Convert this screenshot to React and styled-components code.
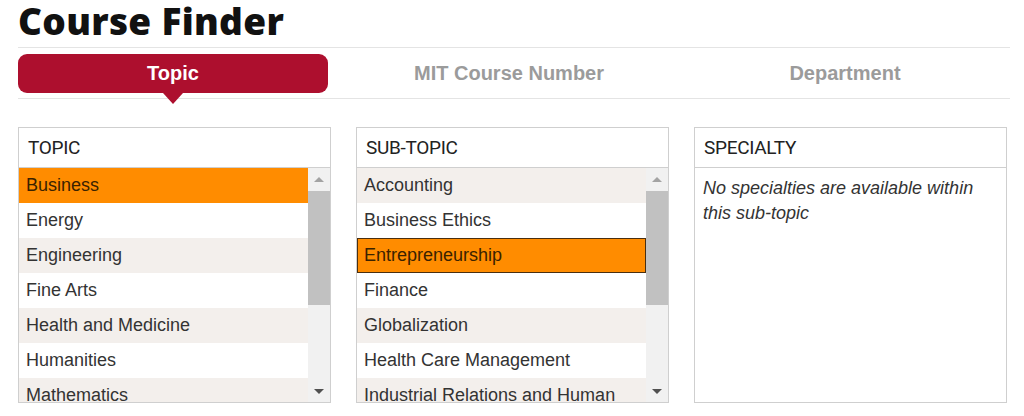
import React from 'react';
import styled, { createGlobalStyle } from 'styled-components';

const GlobalStyle = createGlobalStyle`
  body {
    margin: 0;
    background: #fff;
    font-family: "Liberation Sans", Arial, sans-serif;
  }
`;

const Page = styled.div`
  width: 1024px;
  height: 416px;
  overflow: hidden;
  padding: 0 14px 0 18px;
  box-sizing: border-box;
`;

const Title = styled.h1`
  margin: 0;
  padding-top: 1px;
  height: 46px;
  font-family: "Open Sans", Roboto, sans-serif;
  font-weight: 800;
  font-size: 37px;
  line-height: 40px;
  color: #111;
  letter-spacing: 0.3px;
`;

const TabBar = styled.div`
  border-top: 1px solid #e4e4e4;
  border-bottom: 1px solid #e4e4e4;
  padding: 6px 0 5px;
  display: grid;
  grid-template-columns: repeat(3, 310px);
  column-gap: 26px;
`;

const Tab = styled.div`
  position: relative;
  height: 39px;
  border-radius: 9px;
  display: flex;
  align-items: center;
  justify-content: center;
  font-weight: 700;
  font-size: 20px;
  color: ${p => (p.$active ? '#fff' : '#9b9b9b')};
  background: ${p => (p.$active ? '#ad0f2e' : 'transparent')};

  ${p => p.$active && `
    &::after {
      content: '';
      position: absolute;
      left: 50%;
      top: 100%;
      margin-left: -10px;
      border-left: 10px solid transparent;
      border-right: 10px solid transparent;
      border-top: 11px solid #ad0f2e;
    }
  `}
`;

const Panels = styled.div`
  margin-top: 28px;
  display: grid;
  grid-template-columns: repeat(3, 313px);
  column-gap: 25px;
`;

const Panel = styled.div`
  border: 1px solid #cfcfcf;
  height: 276px;
  display: flex;
  flex-direction: column;
  box-sizing: border-box;
`;

const PanelHeader = styled.div`
  height: 39px;
  flex: none;
  border-bottom: 1px solid #cfcfcf;
  display: flex;
  align-items: center;
  padding-left: 9px;
  font-family: Roboto, "Noto Sans", sans-serif;
  font-size: 19px;
  font-weight: 400;
  color: #222;
  letter-spacing: -0.3px;
`;

const PanelBody = styled.div`
  flex: 1;
  display: flex;
  min-height: 0;
`;

const List = styled.div`
  flex: 1;
  overflow: hidden;
`;

const Row = styled.div`
  box-sizing: border-box;
  padding: 7px 6px 7px ${p => (p.$focused ? '6px' : '7px')};
  font-size: 18px;
  line-height: 21px;
  color: ${p => (p.$selected ? '#3a2200' : '#333')};
  background: ${p => (p.$selected ? '#ff8c00' : p.$shaded ? '#f3efec' : '#fff')};
  border: ${p => (p.$focused ? '1px solid #4a2f10' : 'none')};
  ${p => p.$focused && 'padding-top: 6px; padding-bottom: 6px;'}
`;

const Scrollbar = styled.div`
  width: 22px;
  flex: none;
  background: #f1f1f1;
  display: flex;
  flex-direction: column;
`;

const ScrollButton = styled.div`
  height: 22px;
  flex: none;
  display: flex;
  align-items: center;
  justify-content: center;
  &::before {
    content: '';
    border-left: 5px solid transparent;
    border-right: 5px solid transparent;
    ${p => (p.$down
      ? 'border-top: 5px solid #505050;'
      : 'border-bottom: 5px solid #a3a3a3;')}
  }
`;

const Track = styled.div`
  flex: 1;
  display: flex;
  flex-direction: column;
  padding: 1px 0 0;
`;

const Thumb = styled.div`
  height: 114px;
  background: #c1c1c1;
`;

const Note = styled.div`
  padding: 8px 8px;
  font-size: 18px;
  line-height: 25px;
  font-style: italic;
  color: #333;
`;

const topics = [
  'Business', 'Energy', 'Engineering', 'Fine Arts', 'Health and Medicine',
  'Humanities', 'Mathematics', 'Science',
];

const subTopics = [
  'Accounting', 'Business Ethics', 'Entrepreneurship', 'Finance', 'Globalization',
  'Health Care Management', 'Industrial Relations and Human Resources',
];

const SelectList = ({ items, selected, focused }) => (
  <PanelBody>
    <List>
      {items.map((item, i) => (
        <Row
          key={item}
          $shaded={i % 2 === 0}
          $selected={i === selected}
          $focused={i === focused}
        >
          {item}
        </Row>
      ))}
    </List>
    <Scrollbar>
      <ScrollButton />
      <Track>
        <Thumb />
      </Track>
      <ScrollButton $down />
    </Scrollbar>
  </PanelBody>
);

export default function App() {
  return (
    <Page>
      <GlobalStyle />
      <Title>Course Finder</Title>
      <TabBar>
        <Tab $active>Topic</Tab>
        <Tab>MIT Course Number</Tab>
        <Tab>Department</Tab>
      </TabBar>
      <Panels>
        <Panel>
          <PanelHeader>TOPIC</PanelHeader>
          <SelectList items={topics} selected={0} />
        </Panel>
        <Panel>
          <PanelHeader>SUB-TOPIC</PanelHeader>
          <SelectList items={subTopics} selected={2} focused={2} />
        </Panel>
        <Panel>
          <PanelHeader>SPECIALTY</PanelHeader>
          <Note>No specialties are available within this sub-topic</Note>
        </Panel>
      </Panels>
    </Page>
  );
}
